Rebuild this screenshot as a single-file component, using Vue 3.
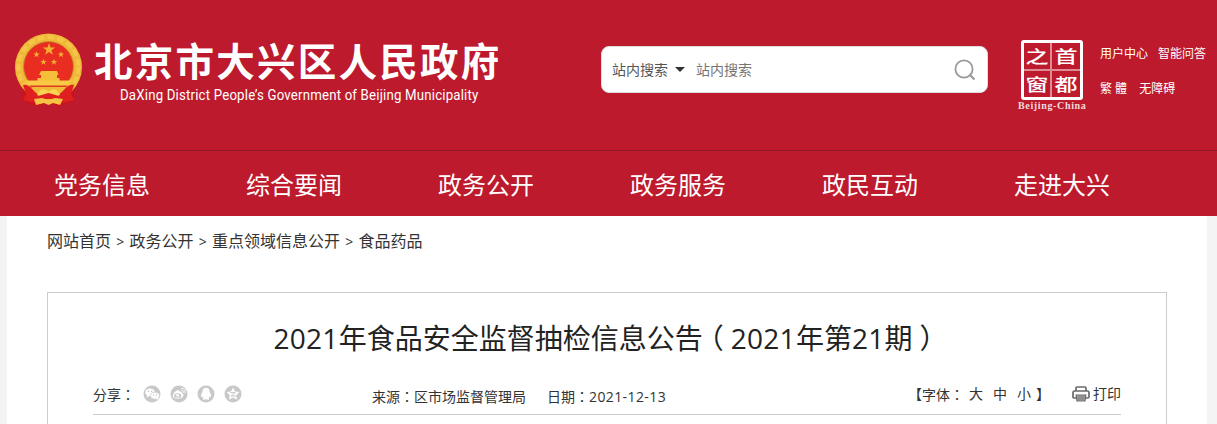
<template>
  <div class="page">
    <header class="header">
      <div class="top">
        <svg class="emblem" viewBox="0 0 68 74" width="68" height="74">
          <path d="M9 52L59 52L60 68L51 72L44 73L34 70L24 73L17 72L8 67Z" fill="#c9141c" />
          <circle cx="34.5" cy="34" r="33.5" fill="#efb838" />
          <circle cx="34.5" cy="34" r="30" fill="none" stroke="#f4c548" stroke-width="4" stroke-dasharray="7 3" />
          <circle cx="34.5" cy="33.5" r="25" fill="#e92d21" stroke="#c9912b" />
          <path v-for="(s, i) in stars" :key="i" :d="starPath(s.x, s.y, s.r)" fill="#f0b030" />
          <path d="M27 38H43L44.5 42H43V45H45.5V50H23.5V45H27V42H25Z" fill="#f6bf3a" />
          <path d="M11 47.5H58L54 54H15Z" fill="#f8c945" />
          <path d="M15 52.5H54L51 55H18Z" fill="#e23a20" />
          <path d="M18 54H52L48 63H21Z" fill="#efb838" />
          <path d="M9 52C15 50 18 57 25 62L20 70L9 67L12 61Z" fill="#df1f20" />
          <path d="M60 52C54 50 51 57 44 62L49 70L60 67L57 61Z" fill="#df1f20" />
          <path d="M23 62C27 54 31 56 34.5 59C38 56 42 54 46 62L41 64L34.5 61L28 64Z" fill="#fbd252" />
          <path d="M24 63L34.5 60L45 63L48 66H21Z" fill="#df1f20" />
          <path d="M20 66L28 65L34.5 67L41 65L49 66L46 72L39 70L34.5 72L30 70L22 72Z" fill="#f5c344" />
        </svg>
        <div class="brand">
          <div class="brand-name">北京市大兴区人民政府</div>
          <div class="brand-en">DaXing District People’s Government of Beijing Municipality</div>
        </div>
        <div class="search">
          <span class="search-type">站内搜索</span>
          <i class="caret"></i>
          <span class="search-input">站内搜索</span>
          <svg class="search-icon" viewBox="0 0 22 22" width="22" height="22" fill="none" stroke="#999" stroke-width="1.8">
            <circle cx="10" cy="10" r="8.6" />
            <path d="M15.5 15.5L20.5 20.5" stroke-width="2.2" />
          </svg>
        </div>
        <div class="capital">
          <div class="seal">
            <div v-for="c in sealChars" :key="c" class="seal-cell"><span>{{ c }}</span></div>
          </div>
          <div class="seal-en">Beijing-China</div>
        </div>
        <div class="links">
          <div class="link-row"><span>用户中心</span><span>智能问答</span></div>
          <div class="link-row second"><span>繁 體</span><span>无障碍</span></div>
        </div>
      </div>
      <nav class="nav">
        <a v-for="item in navItems" :key="item">{{ item }}</a>
      </nav>
    </header>

    <main class="main">
      <div class="crumbs">
        <template v-for="(c, i) in crumbs" :key="c">
          <span v-if="i" class="sep">&gt;</span>
          <span>{{ c }}</span>
        </template>
      </div>

      <article class="article">
        <h1 class="title"><span class="num">2021</span>年食品安全监督抽检信息公告<span class="paren">（</span><span class="num">2021</span>年第<span class="num">21</span>期<span class="paren">）</span></h1>
        <div class="meta">
          <div class="share">
            <span>分享<span class="colon">：</span></span>
            <svg viewBox="0 0 18 18" width="18" height="18">
              <circle cx="9" cy="9" r="8.5" fill="#c8c8c8" />
              <ellipse cx="7" cy="7.3" rx="4.8" ry="3.9" fill="#fff" />
              <path d="M4 10L3.5 12.5L6.5 11Z" fill="#fff" />
              <ellipse cx="12" cy="10.7" rx="4.5" ry="3.5" fill="#fff" stroke="#c8c8c8" stroke-width=".7" />
              <path d="M13 13.5L15 15L14.8 12.7Z" fill="#fff" />
              <circle cx="5.4" cy="6.3" r=".7" fill="#bbb" /><circle cx="8.7" cy="6.3" r=".7" fill="#bbb" />
              <circle cx="10.6" cy="9.9" r=".6" fill="#bbb" /><circle cx="13.5" cy="9.9" r=".6" fill="#bbb" />
            </svg>
            <svg viewBox="0 0 18 18" width="18" height="18">
              <circle cx="9" cy="9" r="8.5" fill="#c8c8c8" />
              <path d="M7.5 5.2C9 4.7 9.5 5.7 9.2 6.8C11 6 12.5 6.6 12 8.3C13.7 8.9 14 10.5 12.7 12C10.5 14.5 4.5 14.7 3 12C1.9 9.8 5 6 7.5 5.2Z" fill="#fff" />
              <ellipse cx="7.6" cy="10.8" rx="3.6" ry="2.6" fill="#c8c8c8" />
              <circle cx="7.4" cy="10.9" r="1.8" fill="#fff" /><circle cx="7" cy="11.2" r=".8" fill="#bbb" />
              <path d="M11 3.4C14 2.8 16 5.2 15 8M11.3 5.3C13 5 14 6.2 13.4 7.6" fill="none" stroke="#fff" stroke-width="1" />
            </svg>
            <svg viewBox="0 0 18 18" width="18" height="18">
              <circle cx="9" cy="9" r="8.5" fill="#c8c8c8" />
              <path d="M9 2.8C6.6 2.8 5.3 4.6 5.4 7C4.3 8.6 3.6 10.3 4 12C4.5 12 4.9 11.5 5.2 11.2C5.4 12 5.8 12.7 6.4 13.2C5.5 13.7 5.5 14.8 7 14.8C8 14.8 8.7 14.5 9 14.1C9.3 14.5 10 14.8 11 14.8C12.5 14.8 12.5 13.7 11.6 13.2C12.2 12.7 12.6 12 12.8 11.2C13.1 11.5 13.5 12 14 12C14.4 10.3 13.7 8.6 12.6 7C12.7 4.6 11.4 2.8 9 2.8Z" fill="#fff" />
            </svg>
            <svg viewBox="0 0 18 18" width="18" height="18">
              <circle cx="9" cy="9" r="8.5" fill="#c8c8c8" />
              <path :d="starPath(9, 9.2, 6.8, 0.5)" fill="#fff" />
              <path d="M6.2 7.6H11.2L7.2 11H12" fill="none" stroke="#c8c8c8" stroke-width="1" />
            </svg>
          </div>
          <div class="source">
            <span>来源<span class="colon">：</span>区市场监督管理局</span>
            <span class="date">日期<span class="colon">：</span><span class="digits">2021-12-13</span></span>
          </div>
          <div class="tools">
            <span class="bracket">【</span><span>字体<span class="colon">：</span></span>
            <span class="size">大</span><span class="size">中</span><span class="size">小</span><span class="bracket-end">】</span>
            <svg class="printer" viewBox="0 0 18 16" width="18" height="16" fill="none" stroke="#6a6a6a" stroke-width="1.7">
              <path d="M4 5V2Q4 1 5 1H13Q14 1 14 2V5" />
              <path d="M4 12H2.4C1.4 12 1 11.5 1 10.7V6.5C1 5.5 1.5 5 2.5 5H15.5C16.5 5 17 5.5 17 6.5V10.7C17 11.5 16.6 12 15.6 12H14" />
              <path d="M4.2 9H13.8L13 15H5Z" fill="#aaa" stroke-width="1.2" />
              <path d="M5.5 11H12.5M5.8 13H12.2" stroke-width=".8" />
            </svg>
            <span>打印</span>
          </div>
        </div>
      </article>
    </main>
  </div>
</template>

<script setup>
const navItems = ['党务信息', '综合要闻', '政务公开', '政务服务', '政民互动', '走进大兴']
const crumbs = ['网站首页', '政务公开', '重点领域信息公开', '食品药品']
const sealChars = ['之', '首', '窗', '都']

const stars = [
  { x: 35, y: 16.5, r: 6.5 },
  { x: 22.5, y: 21.5, r: 3.4 },
  { x: 47, y: 21.5, r: 3.4 },
  { x: 29.5, y: 29, r: 3.4 },
  { x: 40, y: 29, r: 3.4 }
]

function starPath(cx, cy, r, inner = 0.4) {
  const pts = []
  for (let i = 0; i < 10; i++) {
    const a = -Math.PI / 2 + (i * Math.PI) / 5
    const d = i % 2 ? r * inner : r
    pts.push(`${(cx + d * Math.cos(a)).toFixed(2)} ${(cy + d * Math.sin(a)).toFixed(2)}`)
  }
  return `M${pts.join('L')}Z`
}
</script>

<style>
body {
  margin: 0;
  background: #f4f4f4;
}
</style>

<style scoped>
.page {
  height: 424px;
  overflow: hidden;
  font-family: "Open Sans", "Noto Sans CJK SC", sans-serif;
  color: #333;
  white-space: nowrap;
}

.header {
  background: #bd1a2d;
  color: #fff;
}

.top {
  display: flex;
  align-items: flex-start;
  height: 150px;
  padding-left: 14px;
  box-sizing: border-box;
}

.emblem {
  flex: none;
  margin-top: 33px;
}

.brand {
  width: 519px;
  flex: none;
  padding-top: 34px;
}

.brand-name {
  margin-left: 12px;
  font-family: "Noto Sans CJK SC", sans-serif;
  font-size: 38.5px;
  font-weight: 700;
  line-height: 50px;
  letter-spacing: 2.25px;
}

.brand-en {
  width: 380px;
  margin-left: 38px;
  font-family: Roboto, sans-serif;
  font-size: 14px;
  line-height: 22px;
  letter-spacing: 0.2px;
  transform: scaleX(0.945);
  transform-origin: left;
}

.search {
  display: flex;
  align-items: center;
  flex: none;
  width: 387px;
  height: 47px;
  margin-top: 46px;
  padding: 0 11px 0 10px;
  box-sizing: border-box;
  border: 1px solid #ddd;
  border-radius: 8px;
  background: #fff;
  color: #555;
  font-size: 14px;
}

.search span {
  padding-bottom: 2px;
}

.caret {
  margin: 0 11px 0 7px;
  border: 5px solid transparent;
  border-top-color: #333;
  border-bottom: 0;
}

.search-input {
  color: #757575;
}

.search-icon {
  margin-left: auto;
}

.capital {
  flex: none;
  width: 70px;
  margin: 40px 0 0 29px;
}

.seal {
  display: grid;
  grid-template-columns: 1fr 1fr;
  width: 62px;
  height: 60px;
  margin-left: 4px;
  box-sizing: border-box;
  border: 3px solid #fff;
  border-radius: 3px;
}

.seal-cell {
  display: flex;
  align-items: center;
  justify-content: center;
  overflow: hidden;
  font-family: "Noto Sans CJK SC", sans-serif;
  font-size: 20px;
  font-weight: 500;
  line-height: 26px;
}

.seal-cell span {
  transform: scale(1.15, 0.85);
}

.seal-cell:nth-child(odd) {
  border-right: 2px solid #dd8c96;
}

.seal-cell:nth-child(-n+2) {
  border-bottom: 2px solid #dd8c96;
}

.seal-en {
  margin-left: 1px;
  font-family: "Liberation Serif", serif;
  font-size: 10px;
  font-weight: 700;
  line-height: 12px;
  letter-spacing: 0.65px;
  color: #f5dcdf;
}

.links {
  margin: 45px 0 0 13px;
  font-size: 12px;
  line-height: 18px;
}

.link-row {
  display: flex;
  gap: 10px;
}

.second {
  gap: 12px;
  margin-top: 17px;
}

.nav {
  display: flex;
  height: 65px;
  padding-left: 6px;
  border-top: 1px solid #8f1a25;
}

.nav a {
  width: 192px;
  font-size: 24px;
  line-height: 67px;
  text-align: center;
}

.main {
  height: 208px;
  margin: 0 10px 0 7px;
  padding: 0 40px;
  background: #fff;
}

.crumbs {
  display: flex;
  height: 76px;
  font-size: 16px;
  line-height: 51px;
}

.sep {
  width: 18.5px;
  font-size: 14px;
  text-align: center;
}

.article {
  height: 160px;
  padding: 0 45px;
  box-sizing: border-box;
  border: 1px solid #ccc;
}

.title {
  height: 90px;
  margin: 0;
  color: #222;
  font-size: 28px;
  font-weight: 400;
  line-height: 90px;
  text-align: center;
}

.num {
  letter-spacing: 0.3px;
}

/* half-width parentheses centred in a full-width cell */
.paren {
  padding: 0 7px;
  font-feature-settings: "halt";
}

.colon {
  font-family: "Noto Sans CJK TC", sans-serif;
}

.meta {
  display: flex;
  height: 31px;
  border-bottom: 1px solid #ccc;
  font-size: 14px;
  line-height: 22px;
}

.share {
  display: flex;
  align-items: center;
  height: 22px;
  width: 279px;
  gap: 9px;
}

.share > span {
  margin-right: -1.5px;
}

.source {
  padding-top: 2px;
}

.date {
  margin-left: 21px;
}

.digits {
  letter-spacing: 0.4px;
}

.tools {
  display: flex;
  align-items: center;
  height: 22px;
  margin-left: auto;
}

.size {
  width: 24px;
  text-align: center;
}

.bracket-end {
  margin-right: 22px;
}

.printer {
  margin-right: 3px;
}
</style>
